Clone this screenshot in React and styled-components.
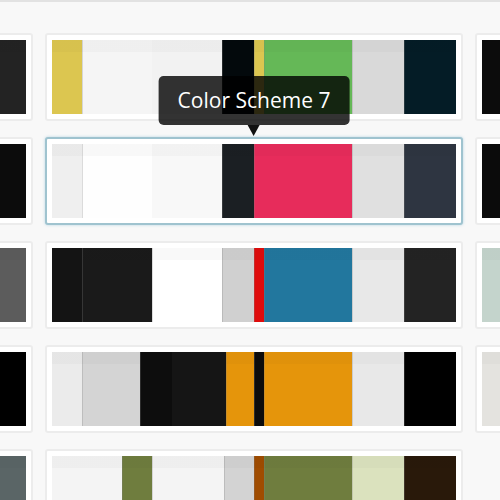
import styled, { createGlobalStyle } from 'styled-components';

const Global = createGlobalStyle`
    html, body {
        margin: 0;
        padding: 0;
        background: #f8f8f8;
        font-family: "Open Sans", "Noto Sans", sans-serif;
        overflow: hidden;
    }
`

const Page = styled.div`
    height: 500px;
    border-top: 2px solid #e2e2e2;
    padding-top: 31px;
    box-sizing: border-box;
    overflow: hidden;
`

const Grid = styled.div`
    display: grid;
    grid-template-columns: repeat(3, 418px);
    column-gap: 12px;
    row-gap: 16px;
    margin-left: -385px;
`

const Card = styled.div`
    position: relative;
    background: #fff;
    border: 2px solid ${p => p.$active ? '#9fc3cf' : '#ececec'};
    border-radius: 3px;
    padding: 5px;
    box-shadow: ${p => p.$active ? '0 0 3px rgba(60, 150, 190, 0.35)' : 'none'};
`

const Strip = styled.div`
    display: flex;
    height: 74px;
`

const Segment = styled.div`
    flex: 0 0 ${p => p.$w}px;
    background-color: ${p => p.$c};
    background-image: linear-gradient(rgba(0, 0, 0, 0.025) 0 12px, transparent 12px);
    box-shadow: ${p => p.$edge ? 'inset 1px 0 0 rgba(128, 128, 128, 0.28)' : 'none'};
`

const Tip = styled.div`
    position: absolute;
    left: 50%;
    bottom: calc(100% + 14px);
    transform: translateX(-50%);
    padding: 11px 19px;
    background: rgba(0, 0, 0, 0.8);
    color: #fff;
    font-size: 21px;
    line-height: 27px;
    border-radius: 5px;
    white-space: nowrap;
    z-index: 2;

    &::after {
        content: '';
        position: absolute;
        left: 50%;
        top: 100%;
        margin-left: -6px;
        border-left: 6px solid transparent;
        border-right: 6px solid transparent;
        border-top: 11px solid #111;
    }
`

const s = (w, c, edge = true) => ({ w, c, edge })

const schemes = [
    // row 1
    [s(30, '#3a3a3a', false), s(70, '#2c2c2c', false), s(70, '#2a2a2a', false), s(32, '#444'), s(10, '#888'), s(88, '#555'), s(52, '#999'), s(52, '#232323')],
    [s(30, '#dcc650', false), s(70, '#f5f5f5'), s(70, '#f2f2f2', false), s(32, '#03090c'), s(10, '#dcc650'), s(88, '#65b857'), s(52, '#d9d9d9'), s(52, '#041c26')],
    [s(30, '#0c0c0c', false), s(70, '#111'), s(70, '#fff'), s(32, '#ddd'), s(10, '#777'), s(88, '#555'), s(52, '#ccc'), s(52, '#222')],
    // row 2
    [s(30, '#333', false), s(70, '#1e1e1e', false), s(70, '#222', false), s(32, '#555'), s(10, '#c00'), s(88, '#444'), s(52, '#ddd'), s(52, '#0c0c0c')],
    [s(30, '#efefef', false), s(70, '#fefefe'), s(70, '#f8f8f8', false), s(32, '#1b1f23'), s(98, '#e72c5b'), s(52, '#e0e0e0'), s(52, '#2e3541')],
    [s(30, '#0b0b0b', false), s(70, '#161616'), s(70, '#eee'), s(32, '#ccc'), s(10, '#888'), s(88, '#333'), s(52, '#ddd'), s(52, '#222')],
    // row 3
    [s(30, '#888', false), s(70, '#777', false), s(70, '#eee'), s(32, '#aaa'), s(10, '#999'), s(88, '#666'), s(52, '#ddd'), s(52, '#5c5c5c')],
    [s(30, '#141414', false), s(70, '#1a1a1a'), s(70, '#ffffff'), s(32, '#d0d0d0'), s(10, '#df0c0c'), s(88, '#22779e'), s(52, '#e8e8e8'), s(52, '#232323')],
    [s(30, '#c4d4cc', false), s(70, '#d8e4de'), s(70, '#eef2f0'), s(32, '#889'), s(10, '#577'), s(88, '#6a8d80'), s(52, '#e8e8e8'), s(52, '#333')],
    // row 4
    [s(30, '#222', false), s(70, '#111', false), s(70, '#eee'), s(32, '#ccc'), s(10, '#f90'), s(88, '#333'), s(52, '#ddd'), s(52, '#000')],
    [s(30, '#ebebeb', false), s(58, '#d4d4d4'), s(32, '#0d0d0d'), s(54, '#151515', false), s(28, '#e5950b'), s(10, '#0c0c0c'), s(88, '#e5950b'), s(52, '#e8e8e8'), s(52, '#000')],
    [s(30, '#e4e3df', false), s(70, '#efeee9'), s(70, '#f5f5f2'), s(32, '#bbb'), s(10, '#888'), s(88, '#777'), s(52, '#ddd'), s(52, '#444')],
    // row 5
    [s(30, '#7a8586', false), s(70, '#6b7677', false), s(70, '#eee'), s(32, '#ccc'), s(10, '#999'), s(88, '#67797a'), s(52, '#ddd'), s(52, '#5a6566')],
    [s(70, '#f4f4f4', false), s(30, '#6f7d3e'), s(72, '#f4f4f4'), s(30, '#d3d3d3'), s(10, '#a04c00'), s(88, '#6f7d3e'), s(52, '#dbe2be'), s(52, '#29190a')],
]

const ACTIVE = 4

export const App = () => {
    return (
        <Page>
            <Global />
            <Grid>
                {schemes.map((segs, i) => (
                    <Card key={i} $active={i === ACTIVE}>
                        {i === ACTIVE && <Tip>Color Scheme 7</Tip>}
                        <Strip>
                            {segs.map((g, j) => (
                                <Segment key={j} $w={g.w} $c={g.c} $edge={g.edge} />
                            ))}
                        </Strip>
                    </Card>
                ))}
            </Grid>
        </Page>
    );
}
export default App;
